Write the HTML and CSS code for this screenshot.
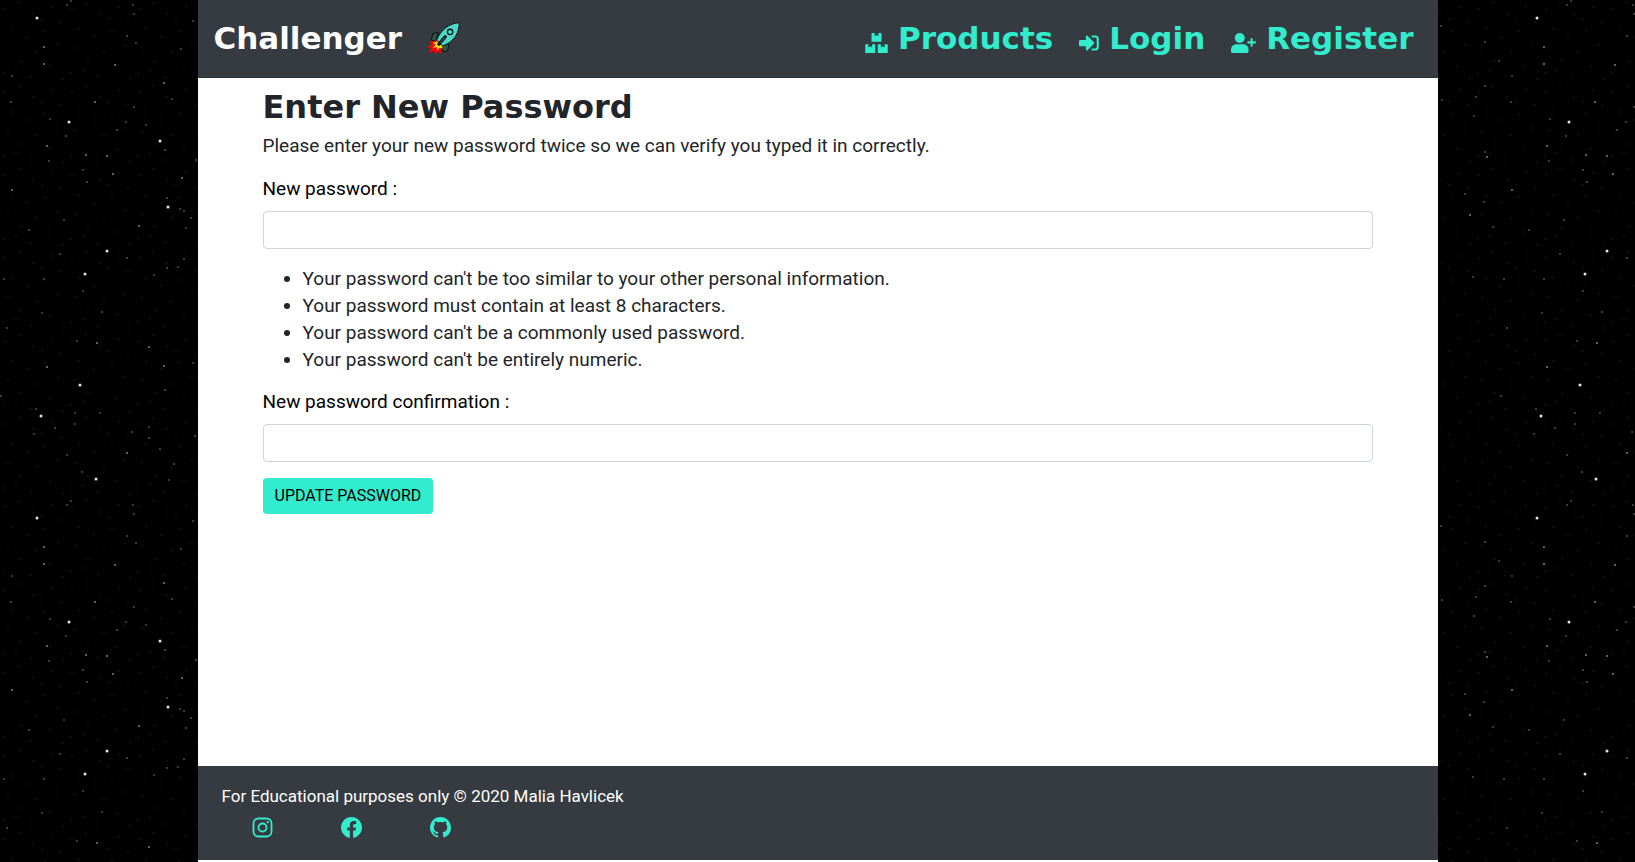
FILE: index.html
```html
<!DOCTYPE html>
<html lang="en">
<head>
<meta charset="utf-8">
<meta name="viewport" content="width=device-width, initial-scale=1">
<title>Challenger - Enter New Password</title>
<link rel="stylesheet" href="styles.css">
</head>
<body>
<svg class="stars" aria-hidden="true">
  <defs>
    <pattern id="dust" width="67" height="83" patternUnits="userSpaceOnUse">
      <path class="star-dust" d="M5 9h0M19 3h0M33 14h0M52 7h0M61 22h0M12 29h0M27 37h0M45 31h0M8 48h0M37 52h0M58 45h0M21 61h0M50 66h0M4 73h0M31 77h0M63 79h0M42 19h0M16 70h0"/>
    </pattern>
    <pattern id="sky" width="500" height="500" patternUnits="userSpaceOnUse">
      <path class="star-faint" d="M67 5h0M71 1h0M133 5h0M136 43h0M134 14h0M127 36h0M193 21h0M181 49h0M11 102h0M12 76h0M50 119h0M66 136h0M117 130h0M126 122h0M146 125h0M134 107h0M172 99h0M83 170h0M49 161h0M87 182h0M165 150h0M196 160h0M167 198h0M180 209h0M184 211h0M191 218h0M186 228h0M64 220h0M29 230h0M60 254h0M127 258h0M184 259h0M167 268h0M178 267h0M154 275h0M4 279h0M44 279h0M83 291h0M42 313h0M102 312h0M7 328h0M77 341h0M165 390h0M193 363h0M1 396h0M36 409h0M75 413h0M100 413h0M75 424h0M55 428h0M34 434h0M132 432h0M149 427h0M149 438h0M160 449h0M195 436h0M67 455h0M174 464h0M82 472h0M169 480h0M441 26h0M485 42h0M499 61h0M485 86h0M476 97h0M442 100h0M474 116h0M485 152h0M465 194h0M484 202h0M493 227h0M473 277h0"/>
      <path class="star-mid" d="M44 47h0M44 64h0M115 65h0M164 83h0M95 102h0M47 146h0M86 155h0M107 156h0M113 174h0M12 190h0M182 178h0M139 226h0M97 343h0M149 347h0M47 367h0M164 366h0M127 453h0M487 157h0M470 215h0"/>
      <path class="star-bright" d="M37 18h0M69 122h0M160 141h0M168 207h0M107 251h0M85 274h0M80 385h0M41 416h0M96 479h0"/>
    </pattern>
  </defs>
  <rect width="100%" height="100%" fill="url(#dust)"/>
  <rect width="100%" height="100%" fill="url(#sky)"/>
</svg>
<div class="page">
  <header class="navbar">
    <a class="brand" href="#">Challenger
      <svg class="rocket" viewBox="0 0 100 100" aria-hidden="true">
        <path d="M34 32L18 35 13 55 27 58zM67 66L62 88 47 90 44 72z" fill="#2f5645" stroke="#111" stroke-width="3"/>
        <path d="M29 55L8 60 14 68 2 75 12 79 8 94 21 87 25 99 34 88 42 96 43 82 48 70z" fill="#f00"/>
        <path d="M30 58L18 64 26 69 17 79 29 76 32 88 37 78 46 80 47 70z" fill="#fd1"/>
        <path d="M98 2C66 5 43 22 29 55L47 73C80 60 97 38 98 2z" fill="#49d9c8" stroke="#111" stroke-width="3"/>
        <circle cx="70" cy="30" r="8" fill="#31edcd" stroke="#111" stroke-width="4"/>
        <path d="M55 45L36 67" stroke="#111" stroke-width="10" stroke-linecap="round"/>
        <path d="M54 47L40 62" stroke="#2f5645" stroke-width="4" stroke-linecap="round"/>
      </svg>
    </a>
    <nav class="links">
      <a class="link" href="#"><svg class="icon icon-boxes" viewBox="0 0 576 512" aria-hidden="true"><path d="M176 0h64v80l48-32 48 32V0h64q16 0 16 16v192q0 16-16 16H176q-16 0-16-16V16q0-16 16-16zM16 288h64v80l48-32 48 32v-80h64q16 0 16 16v192q0 16-16 16H16q-16 0-16-16V304q0-16 16-16zM336 288h64v80l48-32 48 32v-80h64q16 0 16 16v192q0 16-16 16H336q-16 0-16-16V304q0-16 16-16z"/></svg>Products</a>
      <a class="link" href="#"><svg class="icon icon-login" viewBox="0 0 512 512" aria-hidden="true"><path d="M217 70L384 235q16 21 0 42L217 442q-41 25-41-22v-84H32q-32 0-32-32v-96q0-32 32-32h144V92q0-47 41-22z"/><path d="M344 88h72q64 0 64 64v208q0 64-64 64h-72" fill="none" stroke="currentColor" stroke-width="54" stroke-linecap="round"/></svg>Login</a>
      <a class="link" href="#"><svg class="icon icon-user" viewBox="0 0 640 512" aria-hidden="true"><circle cx="224" cy="128" r="128"/><path d="M134 288h180c74 0 134 60 134 134v42q0 48-48 48H48q-48 0-48-48v-42c0-74 60-134 134-134z"/><path d="M528 152v176M440 240h176" stroke="currentColor" stroke-width="52" stroke-linecap="round"/></svg>Register</a>
    </nav>
  </header>
  <main class="content">
    <h1 class="title">Enter New Password</h1>
    <p class="intro">Please enter your new password twice so we can verify you typed it in correctly.</p>
    <form>
      <label class="label" for="new-password">New password :</label>
      <input class="field" id="new-password" type="password">
      <ul class="hints">
        <li>Your password can't be too similar to your other personal information.</li>
        <li>Your password must contain at least 8 characters.</li>
        <li>Your password can't be a commonly used password.</li>
        <li>Your password can't be entirely numeric.</li>
      </ul>
      <label class="label" for="confirm-password">New password confirmation :</label>
      <input class="field" id="confirm-password" type="password">
      <button class="button" type="submit">UPDATE PASSWORD</button>
    </form>
  </main>
  <footer class="footer">
    <p class="copyright">For Educational purposes only © 2020 Malia Havlicek</p>
    <div class="social">
      <a href="#" aria-label="Instagram"><svg class="social-icon" viewBox="0 0 512 512" aria-hidden="true"><rect x="36" y="36" width="440" height="440" rx="120" fill="none" stroke="currentColor" stroke-width="44"/><circle cx="256" cy="256" r="98" fill="none" stroke="currentColor" stroke-width="44"/><circle cx="384" cy="128" r="28"/></svg></a>
      <a href="#" aria-label="Facebook"><svg class="social-icon" viewBox="8 8 496 496" aria-hidden="true"><path d="M504 256C504 119 393 8 256 8S8 119 8 256c0 123.78 90.69 226.38 209.25 245V327.69h-63V256h63v-54.64c0-62.15 37-96.48 93.67-96.48 27.14 0 55.52 4.84 55.52 4.84v61h-31.28c-30.8 0-40.41 19.12-40.41 38.73V256h68.78l-11 71.69h-57.78V501C413.31 482.38 504 379.78 504 256z"/></svg></a>
      <a href="#" aria-label="GitHub"><svg class="social-icon" viewBox="0 0 16 16" aria-hidden="true"><path d="M8 0C3.58 0 0 3.58 0 8c0 3.54 2.29 6.53 5.47 7.59.4.07.55-.17.55-.38 0-.19-.01-.82-.01-1.49-2.01.37-2.53-.49-2.69-.94-.09-.23-.48-.94-.82-1.13-.28-.15-.68-.52-.01-.53.63-.01 1.08.58 1.23.82.72 1.21 1.87.87 2.33.66.07-.52.28-.87.51-1.07-1.78-.2-3.64-.89-3.64-3.95 0-.87.31-1.59.82-2.15-.08-.2-.36-1.02.08-2.12 0 0 .67-.21 2.2.82.64-.18 1.32-.27 2-.27s1.36.09 2 .27c1.53-1.04 2.2-.82 2.2-.82.44 1.1.16 1.92.08 2.12.51.56.82 1.27.82 2.15 0 3.07-1.87 3.75-3.65 3.95.29.25.54.73.54 1.48 0 1.07-.01 1.93-.01 2.2 0 .21.15.46.55.38A8.01 8.01 0 0 0 16 8c0-4.42-3.58-8-8-8z"/></svg></a>
    </div>
  </footer>
</div>
</body>
</html>
```
FILE: styles.css
```css
* { box-sizing: border-box; }

body {
  margin: 0;
  background: #000;
  color: #212529;
  font: 19px/27px Roboto, sans-serif;
}

.stars {
  position: fixed;
  inset: 0;
  width: 100%;
  height: 100%;
  z-index: -1;
}
.stars path { fill: none; stroke-linecap: round; }
.star-dust { stroke: #111; stroke-width: 2px; }
.star-faint { stroke: #4c4c4c; stroke-width: 2px; }
.star-mid { stroke: #808080; stroke-width: 2px; }
.star-bright { stroke: #e4e4e4; stroke-width: 3px; }

.page {
  display: flex;
  flex-direction: column;
  max-width: 1240px;
  min-height: 100vh;
  margin: 0 auto;
  padding-bottom: 2px;
  background: #fff;
}

.navbar {
  display: flex;
  align-items: center;
  justify-content: space-between;
  padding: 16px 24px 16px 16px;
  background: #363a41;
  border-bottom: 1px solid #2f3238;
  font: bold 31px/45px "DejaVu Sans", sans-serif;
}
.brand {
  display: flex;
  align-items: center;
  gap: 25px;
  color: #fff;
  text-decoration: none;
}
.rocket { width: 33px; height: 33px; }
.links { display: flex; gap: 26px; }
.link {
  display: flex;
  align-items: center;
  gap: 10px;
  color: #31edcd;
  text-decoration: none;
}
.icon { height: 20px; margin-top: 8px; fill: currentColor; }
.icon-boxes { width: 23px; }
.icon-login { width: 20px; }
.icon-user { width: 25px; }

.content {
  flex: 1;
  width: 100%;
  max-width: 1140px;
  margin: 0 auto;
  padding: 8px 15px;
}
.title {
  margin: 0 0 4px;
  font: bold 32px/42px "DejaVu Sans", sans-serif;
}
.intro { margin: 0 0 16px; }
.label {
  display: block;
  margin-bottom: 9px;
  color: #000;
}
.field {
  display: block;
  width: 100%;
  height: 38px;
  margin-bottom: 16px;
  padding: 6px 12px;
  border: 1px solid #ced4da;
  border-radius: 4px;
  background: #fff;
  font: inherit;
}
.hints { margin: 0 0 15px; padding-left: 40px; }
.button {
  padding: 6px 12px;
  border: 0;
  border-radius: 4px;
  background: #31edcd;
  color: #000;
  font: 16px/24px Roboto, sans-serif;
}

.footer {
  padding: 18px 24px 22px;
  background: #363a41;
  color: #fff;
}
.copyright { margin: 0; font-size: 17px; line-height: 24px; }
.social {
  display: flex;
  gap: 68px;
  margin-top: 9px;
  padding-left: 30px;
}
.social a { display: flex; color: #31edcd; }
.social-icon { width: 21px; height: 21px; fill: currentColor; }
```
